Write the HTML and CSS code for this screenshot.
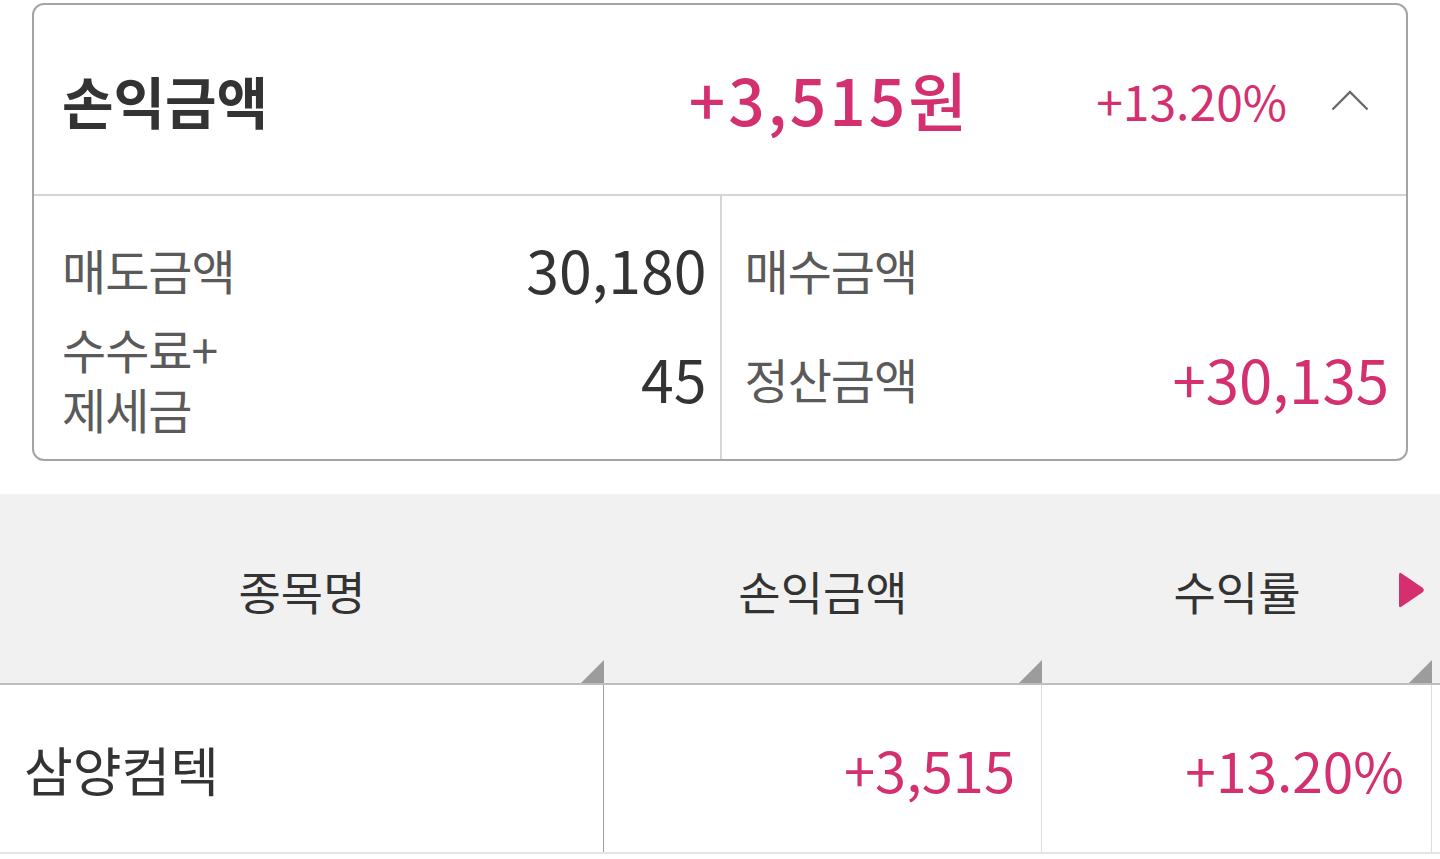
FILE: index.html
```html
<!DOCTYPE html>
<html lang="ko">
<head>
<meta charset="utf-8">
<title>손익금액</title>
<link rel="stylesheet" href="styles.css">
</head>
<body>
<div class="page">
  <section class="card">
    <div class="card-head">
      <div class="head-title">손익금액</div>
      <div class="head-amount">+3,515원</div>
      <div class="head-pct">+13.20%</div>
      <div class="head-chevron">
        <svg width="38" height="22" viewBox="0 0 38 22"><polyline points="1.5,20.5 19,3 36.5,20.5" fill="none" stroke="#6a6a6a" stroke-width="2.4"/></svg>
      </div>
    </div>
    <div class="card-body">
      <div class="col col-left">
        <div class="cell">
          <span class="label">매도금액</span>
          <span class="value">30,180</span>
        </div>
        <div class="cell">
          <span class="label label-multi"><span class="line">수수료+</span><span class="line">제세금</span></span>
          <span class="value">45</span>
        </div>
      </div>
      <div class="col col-right">
        <div class="cell">
          <span class="label">매수금액</span>
          <span class="value"></span>
        </div>
        <div class="cell">
          <span class="label">정산금액</span>
          <span class="value plus">+30,135</span>
        </div>
      </div>
    </div>
  </section>

  <section class="table">
    <div class="thead">
      <div class="th th-name">종목명<span class="corner"></span></div>
      <div class="th th-amt">손익금액<span class="corner"></span></div>
      <div class="th th-rate">수익률<span class="corner"></span></div>
      <div class="th th-rest"></div>
      <svg class="play" width="28" height="38" viewBox="0 0 28 38"><path d="M2 3.5 Q2 1 4.3 2.2 L26 17 Q27.8 19 26 21 L4.3 35.8 Q2 37 2 34.5 Z" fill="#d4306f"/></svg>
    </div>
    <div class="trow">
      <div class="td td-name">삼양컴텍</div>
      <div class="td td-amt plus">+3,515</div>
      <div class="td td-rate plus">+13.20%</div>
      <div class="td td-rest"></div>
    </div>
  </section>
</div>
</body>
</html>
```

FILE: styles.css
```css
html, body {
  margin: 0;
  padding: 0;
  background: #ffffff;
}

body {
  font-family: "Noto Sans CJK KR", "Noto Sans", sans-serif;
  color: #333333;
  width: 1440px;
  height: 859px;
  overflow: hidden;
}

.page {
  padding-top: 3px;
}

.plus {
  color: #d4306f;
}

/* ---------- summary card ---------- */
.card {
  margin-left: 32px;
  width: 1376px;
  box-sizing: border-box;
  border: 2px solid #a4a4a4;
  border-radius: 12px;
  overflow: hidden;
}

.card-head {
  height: 189px;
  display: flex;
  align-items: center;
  padding-left: 28px;
  border-bottom: 2px solid #d4d4d4;
}

.head-title {
  flex: 1;
  font-size: 56px;
  font-weight: 700;
  color: #333333;
}

.head-amount {
  font-size: 64px;
  font-weight: 500;
  color: #d4306f;
  letter-spacing: 3px;
  margin-right: -3px;
  margin-bottom: 4px;
}

.head-pct {
  margin-left: 129px;
  font-size: 48px;
  font-weight: 400;
  color: #d4306f;
}

.head-chevron {
  margin-left: 44px;
  margin-right: 37px;
  width: 38px;
  height: 22px;
  display: flex;
}

.card-body {
  display: flex;
}

.col {
  flex: 1;
  display: grid;
  grid-template-rows: 58px 120px;
  row-gap: 20px;
  padding-top: 44px;
  padding-bottom: 21px;
}

.col-left {
  padding-left: 28px;
  padding-right: 13px;
}

.col-right {
  border-left: 2px solid #d6d6d6;
  padding-left: 23px;
  padding-right: 17px;
}

.cell {
  display: flex;
  align-items: center;
  justify-content: space-between;
}

.label {
  font-size: 48px;
  line-height: 58px;
  color: #5a5a5a;
  letter-spacing: -1px;
}

.label-multi {
  display: flex;
  flex-direction: column;
}

.label-multi .line {
  display: block;
  height: 60px;
  line-height: 60px;
}

.value {
  font-size: 59px;
  line-height: 58px;
  color: #333333;
}

.value.plus {
  font-size: 60px;
  color: #d4306f;
}

/* ---------- table ---------- */
.table {
  margin-top: 33px;
}

.thead {
  position: relative;
  display: flex;
  height: 189px;
  background: #f1f1f1;
  border-bottom: 2px solid #bdbdbd;
}

.th {
  position: relative;
  display: flex;
  align-items: center;
  justify-content: center;
  font-size: 46px;
  color: #333333;
  padding-top: 2px;
  box-sizing: border-box;
}

.th-name { width: 604px; }
.th-amt  { width: 438px; }
.th-rate { width: 390px; }
.th-rest { flex: 1; }

.corner {
  position: absolute;
  right: 0;
  bottom: 0;
  width: 23px;
  height: 23px;
  background: #9c9c9c;
  clip-path: polygon(100% 0, 100% 100%, 0 100%);
}

.play {
  position: absolute;
  left: 1397px;
  top: 77px;
}

.trow {
  display: flex;
  height: 167px;
  border-bottom: 2px solid #e4e4e4;
}

.td {
  display: flex;
  align-items: center;
  box-sizing: border-box;
  font-size: 56px;
}

.td-name {
  width: 604px;
  padding-left: 24px;
  font-size: 53px;
  color: #333333;
  border-right: 1px solid #a0a0a0;
}

.td-amt {
  width: 438px;
  justify-content: flex-end;
  padding-right: 26px;
  border-right: 1px solid #dddddd;
}

.td-rate {
  width: 390px;
  justify-content: flex-end;
  padding-right: 27px;
  font-size: 55px;
  border-right: 1px solid #dddddd;
}

.td-rest {
  flex: 1;
}
```
